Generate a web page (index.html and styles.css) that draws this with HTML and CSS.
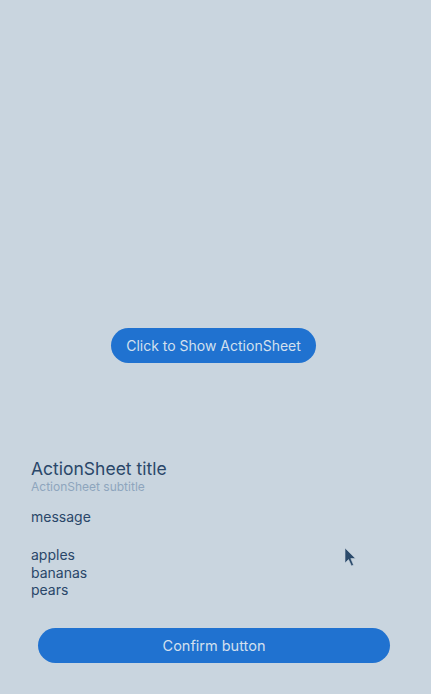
FILE: index.html
```html
<!DOCTYPE html>
<html>
<head>
<meta charset="utf-8">
<link rel="stylesheet" href="styles.css">
</head>
<body>
<div class="page">
  <div class="stage">
    <button class="show-btn">Click to Show ActionSheet</button>
  </div>
  <div class="sheet">
    <div class="title">ActionSheet title</div>
    <div class="subtitle">ActionSheet subtitle</div>
    <div class="message">message</div>
    <ul class="items">
      <li>apples</li>
      <li>bananas</li>
      <li>pears</li>
    </ul>
    <div class="actions">
      <button class="confirm-btn">Confirm button</button>
    </div>
  </div>
  <svg class="cursor" width="14" height="22" viewBox="0 0 14 22">
    <path d="M1 1 L1 16 L4.5 12.5 L7.5 19 L9.5 18 L6.8 11.6 L11.5 11.6 Z" fill="#2b4a6b" stroke="#c9d5df" stroke-width="0.6"/>
  </svg>
</div>
</body>
</html>
```

FILE: styles.css
```css
* { box-sizing: border-box; }
html, body {
  margin: 0;
  padding: 0;
  background: #c9d5df;
}
.page {
  position: relative;
  width: 431px;
  height: 694px;
  overflow: hidden;
  font-family: Inter, "Noto Sans", sans-serif;
}
.stage {
  height: 450px;
  padding-top: 328px;
  padding-left: 111px;
  display: flex;
  justify-content: flex-start;
  align-items: flex-start;
}
.show-btn {
  height: 35px;
  width: 205px;
  border: none;
  border-radius: 18px;
  background: #2072d0;
  color: #d3e0ee;
  font-family: inherit;
  font-size: 14px;
  padding: 0;
}
.sheet {
  padding: 0 31px;
  color: #2a4769;
}
.title {
  font-size: 17.5px;
  line-height: 20px;
  margin-top: 9px;
}
.subtitle {
  font-size: 12px;
  line-height: 14px;
  color: #8ea5bd;
  margin-top: 1px;
}
.message {
  font-size: 14px;
  line-height: 18px;
  margin-top: 14px;
}
.items {
  list-style: none;
  margin: 20px 0 0;
  padding: 0;
  font-size: 14px;
  line-height: 17.5px;
}
.actions {
  margin-top: 29px;
  padding: 0 7px;
}
.confirm-btn {
  display: block;
  width: 352px;
  height: 35px;
  border: none;
  border-radius: 18px;
  background: #2072d0;
  color: #d3e0ee;
  font-family: inherit;
  font-size: 14.5px;
  padding: 0;
}
.cursor {
  position: absolute;
  left: 344px;
  top: 547px;
}
```
